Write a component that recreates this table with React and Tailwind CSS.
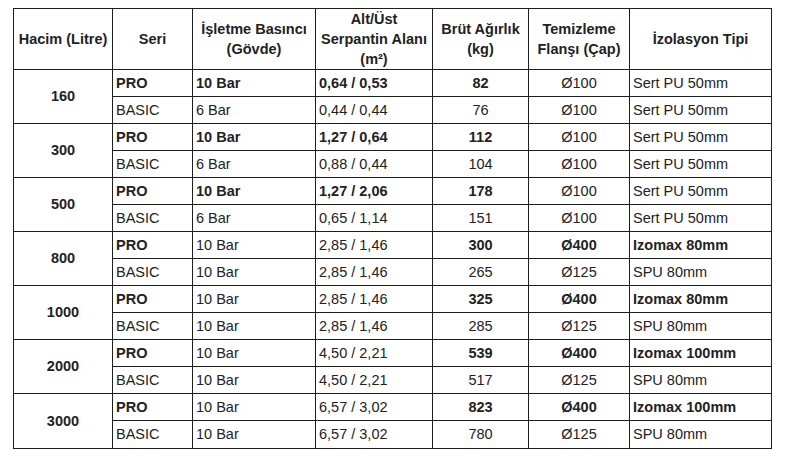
import React from "react";

const rows = [
  { hacim: "160", pro: ["10 Bar", "0,64 / 0,53", "82", "Ø100", "Sert PU 50mm"], basic: ["6 Bar", "0,44 / 0,44", "76", "Ø100", "Sert PU 50mm"], strong: [1, 1, 1, 0, 0] },
  { hacim: "300", pro: ["10 Bar", "1,27 / 0,64", "112", "Ø100", "Sert PU 50mm"], basic: ["6 Bar", "0,88 / 0,44", "104", "Ø100", "Sert PU 50mm"], strong: [1, 1, 1, 0, 0] },
  { hacim: "500", pro: ["10 Bar", "1,27 / 2,06", "178", "Ø100", "Sert PU 50mm"], basic: ["6 Bar", "0,65 / 1,14", "151", "Ø100", "Sert PU 50mm"], strong: [1, 1, 1, 0, 0] },
  { hacim: "800", pro: ["10 Bar", "2,85 / 1,46", "300", "Ø400", "Izomax 80mm"], basic: ["10 Bar", "2,85 / 1,46", "265", "Ø125", "SPU 80mm"], strong: [0, 0, 1, 1, 1] },
  { hacim: "1000", pro: ["10 Bar", "2,85 / 1,46", "325", "Ø400", "Izomax 80mm"], basic: ["10 Bar", "2,85 / 1,46", "285", "Ø125", "SPU 80mm"], strong: [0, 0, 1, 1, 1] },
  { hacim: "2000", pro: ["10 Bar", "4,50 / 2,21", "539", "Ø400", "Izomax 100mm"], basic: ["10 Bar", "4,50 / 2,21", "517", "Ø125", "SPU 80mm"], strong: [0, 0, 1, 1, 1] },
  { hacim: "3000", pro: ["10 Bar", "6,57 / 3,02", "823", "Ø400", "Izomax 100mm"], basic: ["10 Bar", "6,57 / 3,02", "780", "Ø125", "SPU 80mm"], strong: [0, 0, 1, 1, 1] },
];

// alignment per data column (basınç, serpantin, brüt, flanş, izolasyon)
const align = ["text-left", "text-left", "text-center", "text-center", "text-left"];

const td = "border border-[#1e1e1e] px-[3px] py-0 align-middle leading-[17px]";
const th = "border border-[#1e1e1e] px-1 py-0 align-middle text-center font-bold leading-[20px]";

const Cells = ({ vals, strong }) =>
  vals.map((v, i) => (
    <td key={i} className={`${td} ${align[i]} ${strong && strong[i] ? "font-bold" : ""}`}>
      {v}
    </td>
  ));

export default function App() {
  return (
    <div className="w-[791px] h-[464px] bg-white pt-[8px] pl-[13px]" style={{ fontFamily: '"Liberation Sans", Arial, sans-serif' }}>
      <table className="table-fixed border-collapse w-[758px] text-[14.5px] text-[#222]">
        <colgroup>
          <col className="w-[99px]" />
          <col className="w-[80px]" />
          <col className="w-[123px]" />
          <col className="w-[117px]" />
          <col className="w-[96px]" />
          <col className="w-[101px]" />
          <col className="w-[142px]" />
        </colgroup>
        <thead>
          <tr className="h-[61px]">
            <th className={th}>Hacim (Litre)</th>
            <th className={th}>Seri</th>
            <th className={th}>
              İşletme Basıncı
              <br />
              (Gövde)
            </th>
            <th className={th}>
              Alt/Üst
              <br />
              Serpantin Alanı
              <br />
              (m²)
            </th>
            <th className={th}>
              Brüt Ağırlık
              <br />
              (kg)
            </th>
            <th className={th}>
              Temizleme
              <br />
              Flanşı (Çap)
            </th>
            <th className={th}>İzolasyon Tipi</th>
          </tr>
        </thead>
        <tbody>
          {rows.map((r, idx) => (
            <React.Fragment key={r.hacim}>
              <tr className="h-[27px]">
                <td rowSpan={2} className={`${td} text-center font-bold`}>
                  {r.hacim}
                </td>
                <td className={`${td} text-left font-bold`}>PRO</td>
                <Cells vals={r.pro} strong={r.strong} />
              </tr>
              <tr className={idx === rows.length - 1 ? "h-[28px]" : "h-[27px]"}>
                <td className={`${td} text-left`}>BASIC</td>
                <Cells vals={r.basic} />
              </tr>
            </React.Fragment>
          ))}
        </tbody>
      </table>
    </div>
  );
}
